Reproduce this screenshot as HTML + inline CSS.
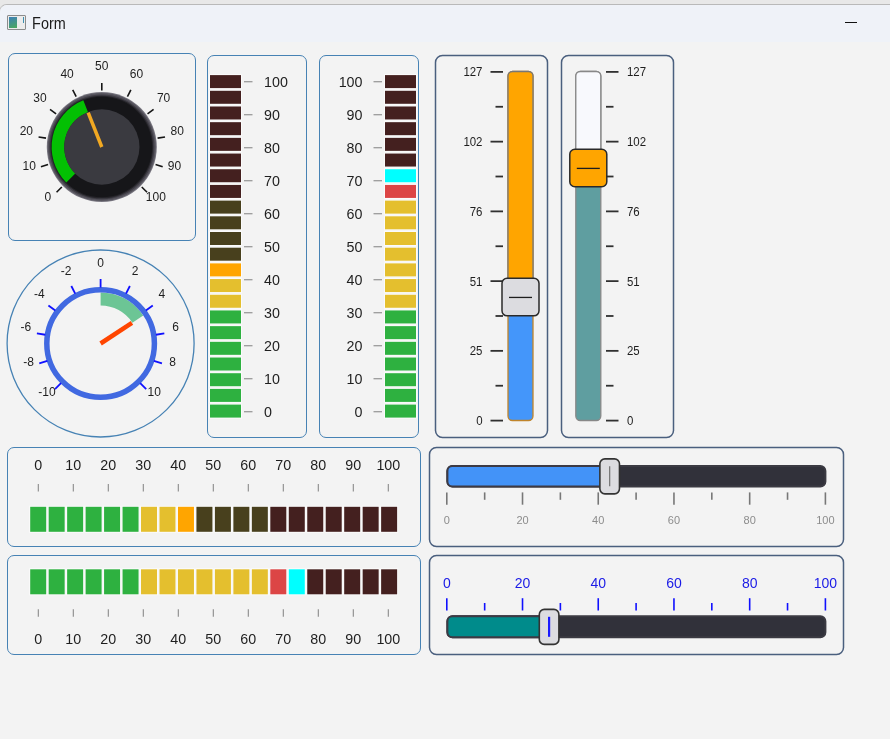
<!DOCTYPE html><html><head><meta charset="utf-8"><title>Form</title><style>
html,body{margin:0;padding:0;}
body{width:890px;height:739px;overflow:hidden;position:relative;background:#e8e8e8;font-family:"Liberation Sans", sans-serif;}
.abs{position:absolute;box-sizing:border-box;}
.pnl{position:absolute;box-sizing:border-box;border:1px solid #4682b4;border-radius:7px;}
.pnl2{position:absolute;box-sizing:border-box;border:1px solid #4f6f92;border-radius:6px;}
svg{position:absolute;left:0;top:0;overflow:visible;will-change:transform;}
</style></head><body>
<div class="abs" style="left:-1px;top:4px;width:900px;height:800px;border-top:1px solid #b9b9b9;border-left:1px solid #c8c8c8;border-top-left-radius:8px;background:#f3f3f3;overflow:hidden">
<div class="abs" style="left:0;top:0;width:900px;height:37px;background:#eff2f8"></div>
</div>
<div class="abs" style="left:7px;top:15px;width:19px;height:15px;border:1px solid #8c8c8c;border-radius:1px;background:#ececec"></div>
<div class="abs" style="left:9px;top:17px;width:8px;height:11px;background:linear-gradient(160deg,#3d7fb8,#4caa5c)"></div>
<div class="abs" style="left:23px;top:17px;width:1px;height:6px;background:#3d8fb0"></div>
<div class="abs" style="left:845px;top:22px;width:12px;height:1px;background:#111"></div>
<div class="pnl" style="left:8px;top:53px;width:188px;height:188px"></div>
<div class="pnl" style="left:207px;top:55px;width:100px;height:383px"></div>
<div class="pnl" style="left:319px;top:55px;width:100px;height:383px"></div>
<div class="pnl" style="left:7px;top:447px;width:414px;height:100px"></div>
<div class="pnl" style="left:7px;top:555px;width:414px;height:100px"></div>
<svg width="890" height="739" viewBox="0 0 890 739" font-family="Liberation Sans, sans-serif"><text x="32.1" y="28.9" font-size="15.9" textLength="33.6" lengthAdjust="spacingAndGlyphs" fill="#1b1b1b">Form</text><defs><radialGradient id="rg1" cx="50%" cy="50%" r="50%"><stop offset="90%" stop-color="#5a5862"/><stop offset="96%" stop-color="#85838d"/><stop offset="100%" stop-color="#6c6a74"/></radialGradient></defs><circle cx="101.8" cy="147.0" r="55" fill="#76747e"/><circle cx="101.8" cy="147.0" r="54" fill="#56545d"/><circle cx="101.8" cy="147.0" r="52.6" fill="#3e3c44"/><circle cx="101.8" cy="147.0" r="51.3" fill="#252429"/><circle cx="101.8" cy="147.0" r="50.3" fill="#161619"/><path d="M66.30,182.50 A50.2,50.2 0 0 1 83.32,100.33 L88.00,112.13 A37.5,37.5 0 0 0 75.28,173.52 Z" fill="#03c003"/><circle cx="101.8" cy="147.0" r="37.7" fill="#3a3a40"/><line x1="101.8" y1="147.0" x2="88.18" y2="112.60" stroke="#f2a922" stroke-width="3.5"/><line x1="61.85" y1="186.95" x2="56.55" y2="192.25" stroke="#151515" stroke-width="1.6"/><text x="47.78" y="200.52" font-size="12" text-anchor="middle" fill="#1e1e1e">0</text><line x1="48.07" y1="164.46" x2="40.93" y2="166.78" stroke="#151515" stroke-width="1.6"/><text x="29.14" y="170.11" font-size="12" text-anchor="middle" fill="#1e1e1e">10</text><line x1="46.00" y1="138.16" x2="38.59" y2="136.99" stroke="#151515" stroke-width="1.6"/><text x="26.34" y="134.55" font-size="12" text-anchor="middle" fill="#1e1e1e">20</text><line x1="56.09" y1="113.79" x2="50.02" y2="109.38" stroke="#151515" stroke-width="1.6"/><text x="39.99" y="101.59" font-size="12" text-anchor="middle" fill="#1e1e1e">30</text><line x1="76.15" y1="96.66" x2="72.74" y2="89.98" stroke="#151515" stroke-width="1.6"/><text x="67.12" y="78.43" font-size="12" text-anchor="middle" fill="#1e1e1e">40</text><line x1="101.80" y1="90.50" x2="101.80" y2="83.00" stroke="#151515" stroke-width="1.6"/><text x="101.80" y="70.10" font-size="12" text-anchor="middle" fill="#1e1e1e">50</text><line x1="127.45" y1="96.66" x2="130.86" y2="89.98" stroke="#151515" stroke-width="1.6"/><text x="136.48" y="78.43" font-size="12" text-anchor="middle" fill="#1e1e1e">60</text><line x1="147.51" y1="113.79" x2="153.58" y2="109.38" stroke="#151515" stroke-width="1.6"/><text x="163.61" y="101.59" font-size="12" text-anchor="middle" fill="#1e1e1e">70</text><line x1="157.60" y1="138.16" x2="165.01" y2="136.99" stroke="#151515" stroke-width="1.6"/><text x="177.26" y="134.55" font-size="12" text-anchor="middle" fill="#1e1e1e">80</text><line x1="155.53" y1="164.46" x2="162.67" y2="166.78" stroke="#151515" stroke-width="1.6"/><text x="174.46" y="170.11" font-size="12" text-anchor="middle" fill="#1e1e1e">90</text><line x1="141.75" y1="186.95" x2="147.05" y2="192.25" stroke="#151515" stroke-width="1.6"/><text x="155.82" y="200.52" font-size="12" text-anchor="middle" fill="#1e1e1e">100</text><circle cx="100.6" cy="343.5" r="93.5" fill="none" stroke="#4682b4" stroke-width="1.3"/><path d="M100.60,292.50 A51,51 0 0 1 143.23,315.50 L132.36,322.64 A38,38 0 0 0 100.60,305.50 Z" fill="#6cc595"/><circle cx="100.6" cy="343.5" r="53.8" fill="none" stroke="#4169e1" stroke-width="5.5"/><line x1="61.00" y1="383.10" x2="54.99" y2="389.11" stroke="#1010ff" stroke-width="1.8"/><text x="47.00" y="396.40" font-size="12" text-anchor="middle" fill="#1e1e1e">-10</text><line x1="47.34" y1="360.80" x2="39.26" y2="363.43" stroke="#1010ff" stroke-width="1.8"/><text x="28.51" y="366.22" font-size="12" text-anchor="middle" fill="#1e1e1e">-8</text><line x1="45.29" y1="334.74" x2="36.89" y2="333.41" stroke="#1010ff" stroke-width="1.8"/><text x="25.73" y="330.94" font-size="12" text-anchor="middle" fill="#1e1e1e">-6</text><line x1="55.30" y1="310.58" x2="48.42" y2="305.59" stroke="#1010ff" stroke-width="1.8"/><text x="39.28" y="298.25" font-size="12" text-anchor="middle" fill="#1e1e1e">-4</text><line x1="75.18" y1="293.60" x2="71.32" y2="286.03" stroke="#1010ff" stroke-width="1.8"/><text x="66.19" y="275.26" font-size="12" text-anchor="middle" fill="#1e1e1e">-2</text><line x1="100.60" y1="287.50" x2="100.60" y2="279.00" stroke="#1010ff" stroke-width="1.8"/><text x="100.60" y="267.00" font-size="12" text-anchor="middle" fill="#1e1e1e">0</text><line x1="126.02" y1="293.60" x2="129.88" y2="286.03" stroke="#1010ff" stroke-width="1.8"/><text x="135.01" y="275.26" font-size="12" text-anchor="middle" fill="#1e1e1e">2</text><line x1="145.90" y1="310.58" x2="152.78" y2="305.59" stroke="#1010ff" stroke-width="1.8"/><text x="161.92" y="298.25" font-size="12" text-anchor="middle" fill="#1e1e1e">4</text><line x1="155.91" y1="334.74" x2="164.31" y2="333.41" stroke="#1010ff" stroke-width="1.8"/><text x="175.47" y="330.94" font-size="12" text-anchor="middle" fill="#1e1e1e">6</text><line x1="153.86" y1="360.80" x2="161.94" y2="363.43" stroke="#1010ff" stroke-width="1.8"/><text x="172.69" y="366.22" font-size="12" text-anchor="middle" fill="#1e1e1e">8</text><line x1="140.20" y1="383.10" x2="146.21" y2="389.11" stroke="#1010ff" stroke-width="1.8"/><text x="154.20" y="396.40" font-size="12" text-anchor="middle" fill="#1e1e1e">10</text><line x1="100.6" y1="343.5" x2="131.94" y2="322.91" stroke="#ff4500" stroke-width="4.5"/><rect x="209" y="74.10" width="33" height="15.0" fill="#fbfbfb"/><rect x="210" y="75.10" width="31" height="13.0" fill="#44201f"/><rect x="209" y="89.79" width="33" height="15.0" fill="#fbfbfb"/><rect x="210" y="90.79" width="31" height="13.0" fill="#44201f"/><rect x="209" y="105.48" width="33" height="15.0" fill="#fbfbfb"/><rect x="210" y="106.48" width="31" height="13.0" fill="#44201f"/><rect x="209" y="121.17" width="33" height="15.0" fill="#fbfbfb"/><rect x="210" y="122.17" width="31" height="13.0" fill="#44201f"/><rect x="209" y="136.86" width="33" height="15.0" fill="#fbfbfb"/><rect x="210" y="137.86" width="31" height="13.0" fill="#44201f"/><rect x="209" y="152.55" width="33" height="15.0" fill="#fbfbfb"/><rect x="210" y="153.55" width="31" height="13.0" fill="#44201f"/><rect x="209" y="168.24" width="33" height="15.0" fill="#fbfbfb"/><rect x="210" y="169.24" width="31" height="13.0" fill="#44201f"/><rect x="209" y="183.93" width="33" height="15.0" fill="#fbfbfb"/><rect x="210" y="184.93" width="31" height="13.0" fill="#44201f"/><rect x="209" y="199.62" width="33" height="15.0" fill="#fbfbfb"/><rect x="210" y="200.62" width="31" height="13.0" fill="#48401d"/><rect x="209" y="215.31" width="33" height="15.0" fill="#fbfbfb"/><rect x="210" y="216.31" width="31" height="13.0" fill="#48401d"/><rect x="209" y="231.00" width="33" height="15.0" fill="#fbfbfb"/><rect x="210" y="232.00" width="31" height="13.0" fill="#48401d"/><rect x="209" y="246.69" width="33" height="15.0" fill="#fbfbfb"/><rect x="210" y="247.69" width="31" height="13.0" fill="#48401d"/><rect x="209" y="262.38" width="33" height="15.0" fill="#fbfbfb"/><rect x="210" y="263.38" width="31" height="13.0" fill="#ffa500"/><rect x="209" y="278.07" width="33" height="15.0" fill="#fbfbfb"/><rect x="210" y="279.07" width="31" height="13.0" fill="#e4bf2e"/><rect x="209" y="293.76" width="33" height="15.0" fill="#fbfbfb"/><rect x="210" y="294.76" width="31" height="13.0" fill="#e4bf2e"/><rect x="209" y="309.45" width="33" height="15.0" fill="#fbfbfb"/><rect x="210" y="310.45" width="31" height="13.0" fill="#2eb140"/><rect x="209" y="325.14" width="33" height="15.0" fill="#fbfbfb"/><rect x="210" y="326.14" width="31" height="13.0" fill="#2eb140"/><rect x="209" y="340.83" width="33" height="15.0" fill="#fbfbfb"/><rect x="210" y="341.83" width="31" height="13.0" fill="#2eb140"/><rect x="209" y="356.52" width="33" height="15.0" fill="#fbfbfb"/><rect x="210" y="357.52" width="31" height="13.0" fill="#2eb140"/><rect x="209" y="372.21" width="33" height="15.0" fill="#fbfbfb"/><rect x="210" y="373.21" width="31" height="13.0" fill="#2eb140"/><rect x="209" y="387.90" width="33" height="15.0" fill="#fbfbfb"/><rect x="210" y="388.90" width="31" height="13.0" fill="#2eb140"/><rect x="209" y="403.59" width="33" height="15.0" fill="#fbfbfb"/><rect x="210" y="404.59" width="31" height="13.0" fill="#2eb140"/><line x1="244" y1="81.70" x2="252.5" y2="81.70" stroke="#9a9a9a" stroke-width="1.3"/><text x="264" y="87.00" font-size="15" text-anchor="start" textLength="23.85" lengthAdjust="spacingAndGlyphs" fill="#1e1e1e">100</text><line x1="244" y1="114.70" x2="252.5" y2="114.70" stroke="#9a9a9a" stroke-width="1.3"/><text x="264" y="120.00" font-size="15" text-anchor="start" textLength="15.90" lengthAdjust="spacingAndGlyphs" fill="#1e1e1e">90</text><line x1="244" y1="147.70" x2="252.5" y2="147.70" stroke="#9a9a9a" stroke-width="1.3"/><text x="264" y="153.00" font-size="15" text-anchor="start" textLength="15.90" lengthAdjust="spacingAndGlyphs" fill="#1e1e1e">80</text><line x1="244" y1="180.70" x2="252.5" y2="180.70" stroke="#9a9a9a" stroke-width="1.3"/><text x="264" y="186.00" font-size="15" text-anchor="start" textLength="15.90" lengthAdjust="spacingAndGlyphs" fill="#1e1e1e">70</text><line x1="244" y1="213.70" x2="252.5" y2="213.70" stroke="#9a9a9a" stroke-width="1.3"/><text x="264" y="219.00" font-size="15" text-anchor="start" textLength="15.90" lengthAdjust="spacingAndGlyphs" fill="#1e1e1e">60</text><line x1="244" y1="246.70" x2="252.5" y2="246.70" stroke="#9a9a9a" stroke-width="1.3"/><text x="264" y="252.00" font-size="15" text-anchor="start" textLength="15.90" lengthAdjust="spacingAndGlyphs" fill="#1e1e1e">50</text><line x1="244" y1="279.70" x2="252.5" y2="279.70" stroke="#9a9a9a" stroke-width="1.3"/><text x="264" y="285.00" font-size="15" text-anchor="start" textLength="15.90" lengthAdjust="spacingAndGlyphs" fill="#1e1e1e">40</text><line x1="244" y1="312.70" x2="252.5" y2="312.70" stroke="#9a9a9a" stroke-width="1.3"/><text x="264" y="318.00" font-size="15" text-anchor="start" textLength="15.90" lengthAdjust="spacingAndGlyphs" fill="#1e1e1e">30</text><line x1="244" y1="345.70" x2="252.5" y2="345.70" stroke="#9a9a9a" stroke-width="1.3"/><text x="264" y="351.00" font-size="15" text-anchor="start" textLength="15.90" lengthAdjust="spacingAndGlyphs" fill="#1e1e1e">20</text><line x1="244" y1="378.70" x2="252.5" y2="378.70" stroke="#9a9a9a" stroke-width="1.3"/><text x="264" y="384.00" font-size="15" text-anchor="start" textLength="15.90" lengthAdjust="spacingAndGlyphs" fill="#1e1e1e">10</text><line x1="244" y1="411.70" x2="252.5" y2="411.70" stroke="#9a9a9a" stroke-width="1.3"/><text x="264" y="417.00" font-size="15" text-anchor="start" textLength="7.95" lengthAdjust="spacingAndGlyphs" fill="#1e1e1e">0</text><rect x="384" y="74.10" width="33" height="15.0" fill="#fbfbfb"/><rect x="385" y="75.10" width="31" height="13.0" fill="#44201f"/><rect x="384" y="89.79" width="33" height="15.0" fill="#fbfbfb"/><rect x="385" y="90.79" width="31" height="13.0" fill="#44201f"/><rect x="384" y="105.48" width="33" height="15.0" fill="#fbfbfb"/><rect x="385" y="106.48" width="31" height="13.0" fill="#44201f"/><rect x="384" y="121.17" width="33" height="15.0" fill="#fbfbfb"/><rect x="385" y="122.17" width="31" height="13.0" fill="#44201f"/><rect x="384" y="136.86" width="33" height="15.0" fill="#fbfbfb"/><rect x="385" y="137.86" width="31" height="13.0" fill="#44201f"/><rect x="384" y="152.55" width="33" height="15.0" fill="#fbfbfb"/><rect x="385" y="153.55" width="31" height="13.0" fill="#44201f"/><rect x="384" y="168.24" width="33" height="15.0" fill="#fbfbfb"/><rect x="385" y="169.24" width="31" height="13.0" fill="#00ffff"/><rect x="384" y="183.93" width="33" height="15.0" fill="#fbfbfb"/><rect x="385" y="184.93" width="31" height="13.0" fill="#dc4545"/><rect x="384" y="199.62" width="33" height="15.0" fill="#fbfbfb"/><rect x="385" y="200.62" width="31" height="13.0" fill="#e4bf2e"/><rect x="384" y="215.31" width="33" height="15.0" fill="#fbfbfb"/><rect x="385" y="216.31" width="31" height="13.0" fill="#e4bf2e"/><rect x="384" y="231.00" width="33" height="15.0" fill="#fbfbfb"/><rect x="385" y="232.00" width="31" height="13.0" fill="#e4bf2e"/><rect x="384" y="246.69" width="33" height="15.0" fill="#fbfbfb"/><rect x="385" y="247.69" width="31" height="13.0" fill="#e4bf2e"/><rect x="384" y="262.38" width="33" height="15.0" fill="#fbfbfb"/><rect x="385" y="263.38" width="31" height="13.0" fill="#e4bf2e"/><rect x="384" y="278.07" width="33" height="15.0" fill="#fbfbfb"/><rect x="385" y="279.07" width="31" height="13.0" fill="#e4bf2e"/><rect x="384" y="293.76" width="33" height="15.0" fill="#fbfbfb"/><rect x="385" y="294.76" width="31" height="13.0" fill="#e4bf2e"/><rect x="384" y="309.45" width="33" height="15.0" fill="#fbfbfb"/><rect x="385" y="310.45" width="31" height="13.0" fill="#2eb140"/><rect x="384" y="325.14" width="33" height="15.0" fill="#fbfbfb"/><rect x="385" y="326.14" width="31" height="13.0" fill="#2eb140"/><rect x="384" y="340.83" width="33" height="15.0" fill="#fbfbfb"/><rect x="385" y="341.83" width="31" height="13.0" fill="#2eb140"/><rect x="384" y="356.52" width="33" height="15.0" fill="#fbfbfb"/><rect x="385" y="357.52" width="31" height="13.0" fill="#2eb140"/><rect x="384" y="372.21" width="33" height="15.0" fill="#fbfbfb"/><rect x="385" y="373.21" width="31" height="13.0" fill="#2eb140"/><rect x="384" y="387.90" width="33" height="15.0" fill="#fbfbfb"/><rect x="385" y="388.90" width="31" height="13.0" fill="#2eb140"/><rect x="384" y="403.59" width="33" height="15.0" fill="#fbfbfb"/><rect x="385" y="404.59" width="31" height="13.0" fill="#2eb140"/><line x1="373.5" y1="81.70" x2="382" y2="81.70" stroke="#9a9a9a" stroke-width="1.3"/><text x="362.5" y="87.00" font-size="15" text-anchor="end" textLength="23.85" lengthAdjust="spacingAndGlyphs" fill="#1e1e1e">100</text><line x1="373.5" y1="114.70" x2="382" y2="114.70" stroke="#9a9a9a" stroke-width="1.3"/><text x="362.5" y="120.00" font-size="15" text-anchor="end" textLength="15.90" lengthAdjust="spacingAndGlyphs" fill="#1e1e1e">90</text><line x1="373.5" y1="147.70" x2="382" y2="147.70" stroke="#9a9a9a" stroke-width="1.3"/><text x="362.5" y="153.00" font-size="15" text-anchor="end" textLength="15.90" lengthAdjust="spacingAndGlyphs" fill="#1e1e1e">80</text><line x1="373.5" y1="180.70" x2="382" y2="180.70" stroke="#9a9a9a" stroke-width="1.3"/><text x="362.5" y="186.00" font-size="15" text-anchor="end" textLength="15.90" lengthAdjust="spacingAndGlyphs" fill="#1e1e1e">70</text><line x1="373.5" y1="213.70" x2="382" y2="213.70" stroke="#9a9a9a" stroke-width="1.3"/><text x="362.5" y="219.00" font-size="15" text-anchor="end" textLength="15.90" lengthAdjust="spacingAndGlyphs" fill="#1e1e1e">60</text><line x1="373.5" y1="246.70" x2="382" y2="246.70" stroke="#9a9a9a" stroke-width="1.3"/><text x="362.5" y="252.00" font-size="15" text-anchor="end" textLength="15.90" lengthAdjust="spacingAndGlyphs" fill="#1e1e1e">50</text><line x1="373.5" y1="279.70" x2="382" y2="279.70" stroke="#9a9a9a" stroke-width="1.3"/><text x="362.5" y="285.00" font-size="15" text-anchor="end" textLength="15.90" lengthAdjust="spacingAndGlyphs" fill="#1e1e1e">40</text><line x1="373.5" y1="312.70" x2="382" y2="312.70" stroke="#9a9a9a" stroke-width="1.3"/><text x="362.5" y="318.00" font-size="15" text-anchor="end" textLength="15.90" lengthAdjust="spacingAndGlyphs" fill="#1e1e1e">30</text><line x1="373.5" y1="345.70" x2="382" y2="345.70" stroke="#9a9a9a" stroke-width="1.3"/><text x="362.5" y="351.00" font-size="15" text-anchor="end" textLength="15.90" lengthAdjust="spacingAndGlyphs" fill="#1e1e1e">20</text><line x1="373.5" y1="378.70" x2="382" y2="378.70" stroke="#9a9a9a" stroke-width="1.3"/><text x="362.5" y="384.00" font-size="15" text-anchor="end" textLength="15.90" lengthAdjust="spacingAndGlyphs" fill="#1e1e1e">10</text><line x1="373.5" y1="411.70" x2="382" y2="411.70" stroke="#9a9a9a" stroke-width="1.3"/><text x="362.5" y="417.00" font-size="15" text-anchor="end" textLength="7.95" lengthAdjust="spacingAndGlyphs" fill="#1e1e1e">0</text><rect x="435.5" y="55.5" width="112" height="382" rx="7" fill="none" stroke="#4a5f7e" stroke-width="1.5"/><rect x="508.0" y="71.5" width="25" height="349" rx="4.5" fill="#4496fa" stroke="#c0842a" stroke-width="1.3"/><clipPath id="ct435"><rect x="505.5" y="60" width="30" height="237.04"/></clipPath><rect x="508.0" y="71.5" width="25" height="349" rx="4.5" fill="#ffa500" stroke="#777" stroke-width="1.3" clip-path="url(#ct435)"/><line x1="490.5" y1="71.90" x2="503" y2="71.90" stroke="#303030" stroke-width="1.8"/><text x="482.5" y="76.30" font-size="12.5" text-anchor="end" textLength="19.11" lengthAdjust="spacingAndGlyphs" fill="#1e1e1e">127</text><line x1="495.5" y1="106.77" x2="503" y2="106.77" stroke="#303030" stroke-width="1.8"/><line x1="490.5" y1="141.64" x2="503" y2="141.64" stroke="#303030" stroke-width="1.8"/><text x="482.5" y="146.04" font-size="12.5" text-anchor="end" textLength="19.11" lengthAdjust="spacingAndGlyphs" fill="#1e1e1e">102</text><line x1="495.5" y1="176.51" x2="503" y2="176.51" stroke="#303030" stroke-width="1.8"/><line x1="490.5" y1="211.38" x2="503" y2="211.38" stroke="#303030" stroke-width="1.8"/><text x="482.5" y="215.78" font-size="12.5" text-anchor="end" textLength="12.74" lengthAdjust="spacingAndGlyphs" fill="#1e1e1e">76</text><line x1="495.5" y1="246.25" x2="503" y2="246.25" stroke="#303030" stroke-width="1.8"/><line x1="490.5" y1="281.12" x2="503" y2="281.12" stroke="#303030" stroke-width="1.8"/><text x="482.5" y="285.52" font-size="12.5" text-anchor="end" textLength="12.74" lengthAdjust="spacingAndGlyphs" fill="#1e1e1e">51</text><line x1="495.5" y1="315.99" x2="503" y2="315.99" stroke="#303030" stroke-width="1.8"/><line x1="490.5" y1="350.86" x2="503" y2="350.86" stroke="#303030" stroke-width="1.8"/><text x="482.5" y="355.26" font-size="12.5" text-anchor="end" textLength="12.74" lengthAdjust="spacingAndGlyphs" fill="#1e1e1e">25</text><line x1="495.5" y1="385.73" x2="503" y2="385.73" stroke="#303030" stroke-width="1.8"/><line x1="490.5" y1="420.60" x2="503" y2="420.60" stroke="#303030" stroke-width="1.8"/><text x="482.5" y="425.00" font-size="12.5" text-anchor="end" textLength="6.37" lengthAdjust="spacingAndGlyphs" fill="#1e1e1e">0</text><rect x="502.00" y="278.34" width="37" height="37.5" rx="5" fill="#dcdce0" stroke="#2a2a2a" stroke-width="1.5"/><line x1="509.00" y1="297.44" x2="532.00" y2="297.44" stroke="#1e1e1e" stroke-width="1.3"/><rect x="561.5" y="55.5" width="112" height="382" rx="7" fill="none" stroke="#4a5f7e" stroke-width="1.5"/><rect x="575.8" y="71.5" width="25" height="349" rx="4.5" fill="#5f9ea0" stroke="#888" stroke-width="1.3"/><clipPath id="ct561"><rect x="573.3" y="60" width="30" height="108.00"/></clipPath><rect x="575.8" y="71.5" width="25" height="349" rx="4.5" fill="#f8f9fd" stroke="#888" stroke-width="1.3" clip-path="url(#ct561)"/><line x1="606" y1="71.90" x2="618.5" y2="71.90" stroke="#303030" stroke-width="1.8"/><text x="627" y="76.30" font-size="12.5" text-anchor="start" textLength="19.11" lengthAdjust="spacingAndGlyphs" fill="#1e1e1e">127</text><line x1="606" y1="106.77" x2="613.5" y2="106.77" stroke="#303030" stroke-width="1.8"/><line x1="606" y1="141.64" x2="618.5" y2="141.64" stroke="#303030" stroke-width="1.8"/><text x="627" y="146.04" font-size="12.5" text-anchor="start" textLength="19.11" lengthAdjust="spacingAndGlyphs" fill="#1e1e1e">102</text><line x1="606" y1="176.51" x2="613.5" y2="176.51" stroke="#303030" stroke-width="1.8"/><line x1="606" y1="211.38" x2="618.5" y2="211.38" stroke="#303030" stroke-width="1.8"/><text x="627" y="215.78" font-size="12.5" text-anchor="start" textLength="12.74" lengthAdjust="spacingAndGlyphs" fill="#1e1e1e">76</text><line x1="606" y1="246.25" x2="613.5" y2="246.25" stroke="#303030" stroke-width="1.8"/><line x1="606" y1="281.12" x2="618.5" y2="281.12" stroke="#303030" stroke-width="1.8"/><text x="627" y="285.52" font-size="12.5" text-anchor="start" textLength="12.74" lengthAdjust="spacingAndGlyphs" fill="#1e1e1e">51</text><line x1="606" y1="315.99" x2="613.5" y2="315.99" stroke="#303030" stroke-width="1.8"/><line x1="606" y1="350.86" x2="618.5" y2="350.86" stroke="#303030" stroke-width="1.8"/><text x="627" y="355.26" font-size="12.5" text-anchor="start" textLength="12.74" lengthAdjust="spacingAndGlyphs" fill="#1e1e1e">25</text><line x1="606" y1="385.73" x2="613.5" y2="385.73" stroke="#303030" stroke-width="1.8"/><line x1="606" y1="420.60" x2="618.5" y2="420.60" stroke="#303030" stroke-width="1.8"/><text x="627" y="425.00" font-size="12.5" text-anchor="start" textLength="6.37" lengthAdjust="spacingAndGlyphs" fill="#1e1e1e">0</text><rect x="569.80" y="149.30" width="37" height="37.5" rx="5" fill="#ffa500" stroke="#2a2a2a" stroke-width="1.5"/><line x1="576.80" y1="168.40" x2="599.80" y2="168.40" stroke="#1e1e1e" stroke-width="1.3"/><rect x="29.20" y="505.8" width="18" height="27" fill="#fbfbfb"/><rect x="30.20" y="506.8" width="16" height="25" fill="#2eb140"/><rect x="47.67" y="505.8" width="18" height="27" fill="#fbfbfb"/><rect x="48.67" y="506.8" width="16" height="25" fill="#2eb140"/><rect x="66.14" y="505.8" width="18" height="27" fill="#fbfbfb"/><rect x="67.14" y="506.8" width="16" height="25" fill="#2eb140"/><rect x="84.61" y="505.8" width="18" height="27" fill="#fbfbfb"/><rect x="85.61" y="506.8" width="16" height="25" fill="#2eb140"/><rect x="103.08" y="505.8" width="18" height="27" fill="#fbfbfb"/><rect x="104.08" y="506.8" width="16" height="25" fill="#2eb140"/><rect x="121.55" y="505.8" width="18" height="27" fill="#fbfbfb"/><rect x="122.55" y="506.8" width="16" height="25" fill="#2eb140"/><rect x="140.02" y="505.8" width="18" height="27" fill="#fbfbfb"/><rect x="141.02" y="506.8" width="16" height="25" fill="#e4bf2e"/><rect x="158.49" y="505.8" width="18" height="27" fill="#fbfbfb"/><rect x="159.49" y="506.8" width="16" height="25" fill="#e4bf2e"/><rect x="176.96" y="505.8" width="18" height="27" fill="#fbfbfb"/><rect x="177.96" y="506.8" width="16" height="25" fill="#ffa500"/><rect x="195.43" y="505.8" width="18" height="27" fill="#fbfbfb"/><rect x="196.43" y="506.8" width="16" height="25" fill="#48401d"/><rect x="213.90" y="505.8" width="18" height="27" fill="#fbfbfb"/><rect x="214.90" y="506.8" width="16" height="25" fill="#48401d"/><rect x="232.37" y="505.8" width="18" height="27" fill="#fbfbfb"/><rect x="233.37" y="506.8" width="16" height="25" fill="#48401d"/><rect x="250.84" y="505.8" width="18" height="27" fill="#fbfbfb"/><rect x="251.84" y="506.8" width="16" height="25" fill="#48401d"/><rect x="269.31" y="505.8" width="18" height="27" fill="#fbfbfb"/><rect x="270.31" y="506.8" width="16" height="25" fill="#44201f"/><rect x="287.78" y="505.8" width="18" height="27" fill="#fbfbfb"/><rect x="288.78" y="506.8" width="16" height="25" fill="#44201f"/><rect x="306.25" y="505.8" width="18" height="27" fill="#fbfbfb"/><rect x="307.25" y="506.8" width="16" height="25" fill="#44201f"/><rect x="324.72" y="505.8" width="18" height="27" fill="#fbfbfb"/><rect x="325.72" y="506.8" width="16" height="25" fill="#44201f"/><rect x="343.19" y="505.8" width="18" height="27" fill="#fbfbfb"/><rect x="344.19" y="506.8" width="16" height="25" fill="#44201f"/><rect x="361.66" y="505.8" width="18" height="27" fill="#fbfbfb"/><rect x="362.66" y="506.8" width="16" height="25" fill="#44201f"/><rect x="380.13" y="505.8" width="18" height="27" fill="#fbfbfb"/><rect x="381.13" y="506.8" width="16" height="25" fill="#44201f"/><line x1="38.30" y1="484" x2="38.30" y2="491.5" stroke="#8a8a8a" stroke-width="1.1"/><text x="38.30" y="469.9" font-size="15" text-anchor="middle" textLength="7.95" lengthAdjust="spacingAndGlyphs" fill="#1e1e1e">0</text><line x1="73.30" y1="484" x2="73.30" y2="491.5" stroke="#8a8a8a" stroke-width="1.1"/><text x="73.30" y="469.9" font-size="15" text-anchor="middle" textLength="15.90" lengthAdjust="spacingAndGlyphs" fill="#1e1e1e">10</text><line x1="108.30" y1="484" x2="108.30" y2="491.5" stroke="#8a8a8a" stroke-width="1.1"/><text x="108.30" y="469.9" font-size="15" text-anchor="middle" textLength="15.90" lengthAdjust="spacingAndGlyphs" fill="#1e1e1e">20</text><line x1="143.30" y1="484" x2="143.30" y2="491.5" stroke="#8a8a8a" stroke-width="1.1"/><text x="143.30" y="469.9" font-size="15" text-anchor="middle" textLength="15.90" lengthAdjust="spacingAndGlyphs" fill="#1e1e1e">30</text><line x1="178.30" y1="484" x2="178.30" y2="491.5" stroke="#8a8a8a" stroke-width="1.1"/><text x="178.30" y="469.9" font-size="15" text-anchor="middle" textLength="15.90" lengthAdjust="spacingAndGlyphs" fill="#1e1e1e">40</text><line x1="213.30" y1="484" x2="213.30" y2="491.5" stroke="#8a8a8a" stroke-width="1.1"/><text x="213.30" y="469.9" font-size="15" text-anchor="middle" textLength="15.90" lengthAdjust="spacingAndGlyphs" fill="#1e1e1e">50</text><line x1="248.30" y1="484" x2="248.30" y2="491.5" stroke="#8a8a8a" stroke-width="1.1"/><text x="248.30" y="469.9" font-size="15" text-anchor="middle" textLength="15.90" lengthAdjust="spacingAndGlyphs" fill="#1e1e1e">60</text><line x1="283.30" y1="484" x2="283.30" y2="491.5" stroke="#8a8a8a" stroke-width="1.1"/><text x="283.30" y="469.9" font-size="15" text-anchor="middle" textLength="15.90" lengthAdjust="spacingAndGlyphs" fill="#1e1e1e">70</text><line x1="318.30" y1="484" x2="318.30" y2="491.5" stroke="#8a8a8a" stroke-width="1.1"/><text x="318.30" y="469.9" font-size="15" text-anchor="middle" textLength="15.90" lengthAdjust="spacingAndGlyphs" fill="#1e1e1e">80</text><line x1="353.30" y1="484" x2="353.30" y2="491.5" stroke="#8a8a8a" stroke-width="1.1"/><text x="353.30" y="469.9" font-size="15" text-anchor="middle" textLength="15.90" lengthAdjust="spacingAndGlyphs" fill="#1e1e1e">90</text><line x1="388.30" y1="484" x2="388.30" y2="491.5" stroke="#8a8a8a" stroke-width="1.1"/><text x="388.30" y="469.9" font-size="15" text-anchor="middle" textLength="23.85" lengthAdjust="spacingAndGlyphs" fill="#1e1e1e">100</text><rect x="29.20" y="568.3" width="18" height="27" fill="#fbfbfb"/><rect x="30.20" y="569.3" width="16" height="25" fill="#2eb140"/><rect x="47.67" y="568.3" width="18" height="27" fill="#fbfbfb"/><rect x="48.67" y="569.3" width="16" height="25" fill="#2eb140"/><rect x="66.14" y="568.3" width="18" height="27" fill="#fbfbfb"/><rect x="67.14" y="569.3" width="16" height="25" fill="#2eb140"/><rect x="84.61" y="568.3" width="18" height="27" fill="#fbfbfb"/><rect x="85.61" y="569.3" width="16" height="25" fill="#2eb140"/><rect x="103.08" y="568.3" width="18" height="27" fill="#fbfbfb"/><rect x="104.08" y="569.3" width="16" height="25" fill="#2eb140"/><rect x="121.55" y="568.3" width="18" height="27" fill="#fbfbfb"/><rect x="122.55" y="569.3" width="16" height="25" fill="#2eb140"/><rect x="140.02" y="568.3" width="18" height="27" fill="#fbfbfb"/><rect x="141.02" y="569.3" width="16" height="25" fill="#e4bf2e"/><rect x="158.49" y="568.3" width="18" height="27" fill="#fbfbfb"/><rect x="159.49" y="569.3" width="16" height="25" fill="#e4bf2e"/><rect x="176.96" y="568.3" width="18" height="27" fill="#fbfbfb"/><rect x="177.96" y="569.3" width="16" height="25" fill="#e4bf2e"/><rect x="195.43" y="568.3" width="18" height="27" fill="#fbfbfb"/><rect x="196.43" y="569.3" width="16" height="25" fill="#e4bf2e"/><rect x="213.90" y="568.3" width="18" height="27" fill="#fbfbfb"/><rect x="214.90" y="569.3" width="16" height="25" fill="#e4bf2e"/><rect x="232.37" y="568.3" width="18" height="27" fill="#fbfbfb"/><rect x="233.37" y="569.3" width="16" height="25" fill="#e4bf2e"/><rect x="250.84" y="568.3" width="18" height="27" fill="#fbfbfb"/><rect x="251.84" y="569.3" width="16" height="25" fill="#e4bf2e"/><rect x="269.31" y="568.3" width="18" height="27" fill="#fbfbfb"/><rect x="270.31" y="569.3" width="16" height="25" fill="#dc4545"/><rect x="287.78" y="568.3" width="18" height="27" fill="#fbfbfb"/><rect x="288.78" y="569.3" width="16" height="25" fill="#00ffff"/><rect x="306.25" y="568.3" width="18" height="27" fill="#fbfbfb"/><rect x="307.25" y="569.3" width="16" height="25" fill="#44201f"/><rect x="324.72" y="568.3" width="18" height="27" fill="#fbfbfb"/><rect x="325.72" y="569.3" width="16" height="25" fill="#44201f"/><rect x="343.19" y="568.3" width="18" height="27" fill="#fbfbfb"/><rect x="344.19" y="569.3" width="16" height="25" fill="#44201f"/><rect x="361.66" y="568.3" width="18" height="27" fill="#fbfbfb"/><rect x="362.66" y="569.3" width="16" height="25" fill="#44201f"/><rect x="380.13" y="568.3" width="18" height="27" fill="#fbfbfb"/><rect x="381.13" y="569.3" width="16" height="25" fill="#44201f"/><line x1="38.30" y1="609.3" x2="38.30" y2="616.8" stroke="#8a8a8a" stroke-width="1.1"/><text x="38.30" y="644.3" font-size="15" text-anchor="middle" textLength="7.95" lengthAdjust="spacingAndGlyphs" fill="#1e1e1e">0</text><line x1="73.30" y1="609.3" x2="73.30" y2="616.8" stroke="#8a8a8a" stroke-width="1.1"/><text x="73.30" y="644.3" font-size="15" text-anchor="middle" textLength="15.90" lengthAdjust="spacingAndGlyphs" fill="#1e1e1e">10</text><line x1="108.30" y1="609.3" x2="108.30" y2="616.8" stroke="#8a8a8a" stroke-width="1.1"/><text x="108.30" y="644.3" font-size="15" text-anchor="middle" textLength="15.90" lengthAdjust="spacingAndGlyphs" fill="#1e1e1e">20</text><line x1="143.30" y1="609.3" x2="143.30" y2="616.8" stroke="#8a8a8a" stroke-width="1.1"/><text x="143.30" y="644.3" font-size="15" text-anchor="middle" textLength="15.90" lengthAdjust="spacingAndGlyphs" fill="#1e1e1e">30</text><line x1="178.30" y1="609.3" x2="178.30" y2="616.8" stroke="#8a8a8a" stroke-width="1.1"/><text x="178.30" y="644.3" font-size="15" text-anchor="middle" textLength="15.90" lengthAdjust="spacingAndGlyphs" fill="#1e1e1e">40</text><line x1="213.30" y1="609.3" x2="213.30" y2="616.8" stroke="#8a8a8a" stroke-width="1.1"/><text x="213.30" y="644.3" font-size="15" text-anchor="middle" textLength="15.90" lengthAdjust="spacingAndGlyphs" fill="#1e1e1e">50</text><line x1="248.30" y1="609.3" x2="248.30" y2="616.8" stroke="#8a8a8a" stroke-width="1.1"/><text x="248.30" y="644.3" font-size="15" text-anchor="middle" textLength="15.90" lengthAdjust="spacingAndGlyphs" fill="#1e1e1e">60</text><line x1="283.30" y1="609.3" x2="283.30" y2="616.8" stroke="#8a8a8a" stroke-width="1.1"/><text x="283.30" y="644.3" font-size="15" text-anchor="middle" textLength="15.90" lengthAdjust="spacingAndGlyphs" fill="#1e1e1e">70</text><line x1="318.30" y1="609.3" x2="318.30" y2="616.8" stroke="#8a8a8a" stroke-width="1.1"/><text x="318.30" y="644.3" font-size="15" text-anchor="middle" textLength="15.90" lengthAdjust="spacingAndGlyphs" fill="#1e1e1e">80</text><line x1="353.30" y1="609.3" x2="353.30" y2="616.8" stroke="#8a8a8a" stroke-width="1.1"/><text x="353.30" y="644.3" font-size="15" text-anchor="middle" textLength="15.90" lengthAdjust="spacingAndGlyphs" fill="#1e1e1e">90</text><line x1="388.30" y1="609.3" x2="388.30" y2="616.8" stroke="#8a8a8a" stroke-width="1.1"/><text x="388.30" y="644.3" font-size="15" text-anchor="middle" textLength="23.85" lengthAdjust="spacingAndGlyphs" fill="#1e1e1e">100</text><rect x="429.5" y="447.5" width="414" height="99" rx="7" fill="none" stroke="#4a5f7e" stroke-width="1.5"/><rect x="447.4" y="466.00" width="378" height="20.50" rx="5" fill="#31313a" stroke="#3b3a42" stroke-width="2"/><clipPath id="ch447"><rect x="440" y="461.0" width="169.98" height="35"/></clipPath><rect x="447.4" y="466.00" width="378" height="20.50" rx="5" fill="#4393f8" stroke="#3d3a44" stroke-width="2" clip-path="url(#ch447)"/><line x1="446.80" y1="492.40" x2="446.80" y2="504.70" stroke="#777" stroke-width="1.6"/><text x="446.80" y="524.2" font-size="11" text-anchor="middle" fill="#8c8c8c">0</text><line x1="484.66" y1="492.40" x2="484.66" y2="499.80" stroke="#777" stroke-width="1.6"/><line x1="522.52" y1="492.40" x2="522.52" y2="504.70" stroke="#777" stroke-width="1.6"/><text x="522.52" y="524.2" font-size="11" text-anchor="middle" fill="#8c8c8c">20</text><line x1="560.38" y1="492.40" x2="560.38" y2="499.80" stroke="#777" stroke-width="1.6"/><line x1="598.24" y1="492.40" x2="598.24" y2="504.70" stroke="#777" stroke-width="1.6"/><text x="598.24" y="524.2" font-size="11" text-anchor="middle" fill="#8c8c8c">40</text><line x1="636.10" y1="492.40" x2="636.10" y2="499.80" stroke="#777" stroke-width="1.6"/><line x1="673.96" y1="492.40" x2="673.96" y2="504.70" stroke="#777" stroke-width="1.6"/><text x="673.96" y="524.2" font-size="11" text-anchor="middle" fill="#8c8c8c">60</text><line x1="711.82" y1="492.40" x2="711.82" y2="499.80" stroke="#777" stroke-width="1.6"/><line x1="749.68" y1="492.40" x2="749.68" y2="504.70" stroke="#777" stroke-width="1.6"/><text x="749.68" y="524.2" font-size="11" text-anchor="middle" fill="#8c8c8c">80</text><line x1="787.54" y1="492.40" x2="787.54" y2="499.80" stroke="#777" stroke-width="1.6"/><line x1="825.40" y1="492.40" x2="825.40" y2="504.70" stroke="#777" stroke-width="1.6"/><text x="825.40" y="524.2" font-size="11" text-anchor="middle" fill="#8c8c8c">100</text><rect x="599.88" y="458.85" width="19.6" height="35" rx="5" fill="#dcdce0" stroke="#333" stroke-width="1.6"/><line x1="609.68" y1="466.25" x2="609.68" y2="486.25" stroke="#707070" stroke-width="1.2"/><rect x="429.5" y="555.5" width="414" height="99" rx="7" fill="none" stroke="#4a5f7e" stroke-width="1.5"/><rect x="447.4" y="616.30" width="378" height="21.00" rx="5" fill="#31313a" stroke="#3b3a42" stroke-width="2"/><clipPath id="ch555"><rect x="440" y="611.3" width="109.40" height="35"/></clipPath><rect x="447.4" y="616.30" width="378" height="21.00" rx="5" fill="#008b8b" stroke="#3d3a44" stroke-width="2" clip-path="url(#ch555)"/><line x1="446.80" y1="598.20" x2="446.80" y2="610.50" stroke="#1010ff" stroke-width="1.6"/><text x="446.80" y="588.4" font-size="14" text-anchor="middle" fill="#1a1ae6">0</text><line x1="484.66" y1="603.00" x2="484.66" y2="610.50" stroke="#1010ff" stroke-width="1.6"/><line x1="522.52" y1="598.20" x2="522.52" y2="610.50" stroke="#1010ff" stroke-width="1.6"/><text x="522.52" y="588.4" font-size="14" text-anchor="middle" fill="#1a1ae6">20</text><line x1="560.38" y1="603.00" x2="560.38" y2="610.50" stroke="#1010ff" stroke-width="1.6"/><line x1="598.24" y1="598.20" x2="598.24" y2="610.50" stroke="#1010ff" stroke-width="1.6"/><text x="598.24" y="588.4" font-size="14" text-anchor="middle" fill="#1a1ae6">40</text><line x1="636.10" y1="603.00" x2="636.10" y2="610.50" stroke="#1010ff" stroke-width="1.6"/><line x1="673.96" y1="598.20" x2="673.96" y2="610.50" stroke="#1010ff" stroke-width="1.6"/><text x="673.96" y="588.4" font-size="14" text-anchor="middle" fill="#1a1ae6">60</text><line x1="711.82" y1="603.00" x2="711.82" y2="610.50" stroke="#1010ff" stroke-width="1.6"/><line x1="749.68" y1="598.20" x2="749.68" y2="610.50" stroke="#1010ff" stroke-width="1.6"/><text x="749.68" y="588.4" font-size="14" text-anchor="middle" fill="#1a1ae6">80</text><line x1="787.54" y1="603.00" x2="787.54" y2="610.50" stroke="#1010ff" stroke-width="1.6"/><line x1="825.40" y1="598.20" x2="825.40" y2="610.50" stroke="#1010ff" stroke-width="1.6"/><text x="825.40" y="588.4" font-size="14" text-anchor="middle" fill="#1a1ae6">100</text><rect x="539.30" y="609.40" width="19.6" height="35" rx="5" fill="#dcdce0" stroke="#333" stroke-width="1.6"/><line x1="549.10" y1="616.80" x2="549.10" y2="636.80" stroke="#1a1aff" stroke-width="2.2"/></svg>
</body></html>
